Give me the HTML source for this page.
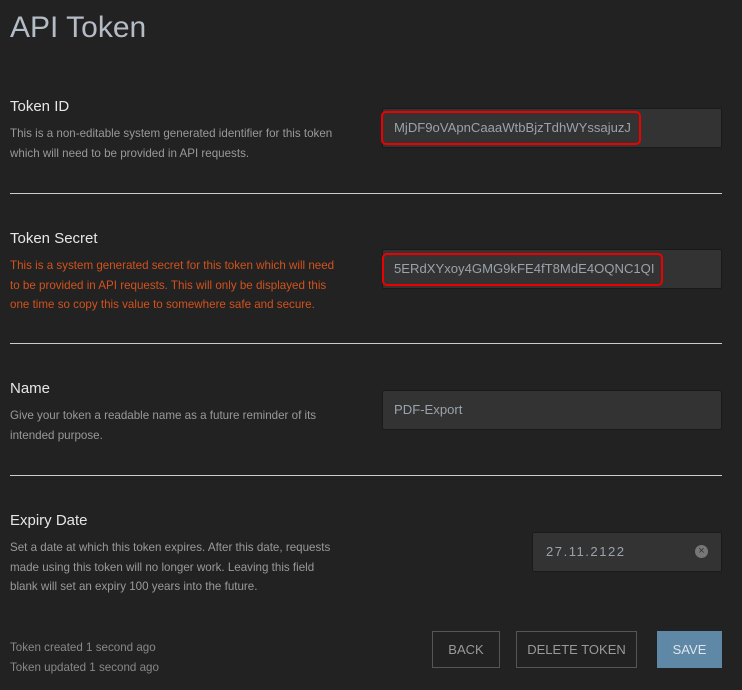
<!DOCTYPE html>
<html><head><style>
body{margin:0;width:742px;height:690px;background:#222;font-family:"Liberation Sans",sans-serif;position:relative;overflow:hidden}
.a{position:absolute;white-space:nowrap}
h1{position:absolute;left:10px;top:11px;margin:0;font-weight:normal;font-size:30px;color:#b4bcc6}
.l{font-size:15px;color:#e6e6e6;left:10px}
.d{font-size:11.6px;color:#999;left:10px;line-height:19.5px}
.o{color:#d2521d}
.in{position:absolute;left:382px;width:338px;height:38px;background:#333;border:1px solid #1a1a1a;border-radius:2px;color:#9aa2ab;font-size:13.1px;line-height:38px;box-sizing:content-box}
.in span{position:absolute;left:11px}
.hr{position:absolute;left:10px;width:712px;height:1px;background:#ccc}
.red{position:absolute;border:2.5px solid #e00;border-radius:5px}
.btn{position:absolute;top:631px;border:1px solid #555;color:#999;font-size:13px;line-height:36px;text-align:center;box-sizing:border-box;height:37px}
</style></head><body>
<h1>API Token</h1>
<div class="a l" style="top:98px">Token ID</div>
<div class="a d" style="top:124px">This is a non-editable system generated identifier for this token<br>which will need to be provided in API requests.</div>
<div class="in" style="top:108px"><span>MjDF9oVApnCaaaWtbBjzTdhWYssajuzJ</span></div>
<div class="red" style="left:381px;top:111px;width:256px;height:30px"></div>
<div class="hr" style="top:193px"></div>
<div class="a l" style="top:230px">Token Secret</div>
<div class="a d o" style="top:256px">This is a system generated secret for this token which will need<br>to be provided in API requests. This will only be displayed this<br>one time so copy this value to somewhere safe and secure.</div>
<div class="in" style="top:249px"><span>5ERdXYxoy4GMG9kFE4fT8MdE4OQNC1QI</span></div>
<div class="red" style="left:382px;top:253px;width:277px;height:29px"></div>
<div class="hr" style="top:343px"></div>
<div class="a l" style="top:380px">Name</div>
<div class="a d" style="top:406px">Give your token a readable name as a future reminder of its<br>intended purpose.</div>
<div class="in" style="top:390px"><span>PDF-Export</span></div>
<div class="hr" style="top:475px"></div>
<div class="a l" style="top:512px">Expiry Date</div>
<div class="a d" style="top:538px">Set a date at which this token expires. After this date, requests<br>made using this token will no longer work. Leaving this field<br>blank will set an expiry 100 years into the future.</div>
<div class="in" style="top:532px;left:532px;width:188px;letter-spacing:1.5px"><span style="left:13px">27.11.2122</span><span style="left:162px;top:12px;width:13px;height:13px;border-radius:50%;background:#777;color:#333;font-size:11px;line-height:13px;text-align:center;letter-spacing:0">×</span></div>
<div class="a d" style="top:638px;color:#888">Token created 1 second ago<br>Token updated 1 second ago</div>
<div class="btn" style="left:432px;width:68px">BACK</div>
<div class="btn" style="left:516px;width:121px">DELETE TOKEN</div>
<div class="btn" style="left:657px;width:65px;background:#5f87a6;border-color:#5f87a6;color:#dde6ee">SAVE</div>
</body></html>
